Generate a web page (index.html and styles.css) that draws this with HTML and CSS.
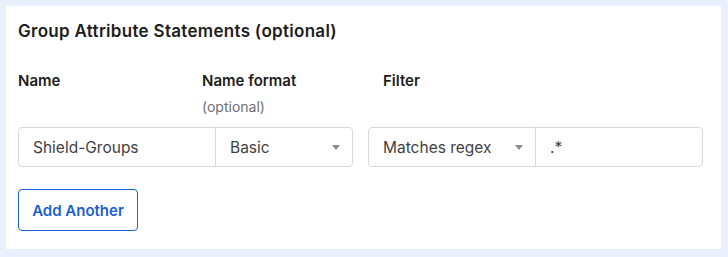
FILE: index.html
```html
<!DOCTYPE html>
<html lang="en">
<head>
    <meta charset="UTF-8">
    <meta name="viewport" content="width=device-width, initial-scale=1.0">
    <title>Group Attribute Statements</title>
    <link rel="stylesheet" href="styles.css">
</head>
<body>
    <div class="panel">
        <h2>Group Attribute Statements (optional)</h2>
        <div class="label-row">
            <div class="label name-label">Name</div>
            <div class="label format-label">Name format<span class="hint">(optional)</span></div>
            <div class="label filter-label">Filter</div>
        </div>
        <div class="field-row">
            <div class="field-group">
                <input type="text" class="text-input name-input" value="Shield-Groups">
                <div class="select format-select">
                    <span>Basic</span>
                    <span class="arrow"></span>
                </div>
            </div>
            <div class="field-group">
                <div class="select filter-select">
                    <span>Matches regex</span>
                    <span class="arrow"></span>
                </div>
                <input type="text" class="text-input filter-input" value=".*">
            </div>
        </div>
        <button type="button" class="add-button">Add Another</button>
    </div>
</body>
</html>
```

FILE: styles.css
```css
body {
    font-family: 'Inter', 'Noto Sans', sans-serif;
    background-color: #e9effc;
    color: #1d1d21;
    margin: 0;
    padding: 6px 7px 8px 6px;
}

.panel {
    background-color: #ffffff;
    height: 243px;
    box-sizing: border-box;
    padding: 15px 12px 0 12px;
}

.panel h2 {
    margin: 0;
    font-size: 17px;
    font-weight: 600;
    line-height: 21px;
    letter-spacing: 0.3px;
}

.label-row {
    display: flex;
    margin-top: 29px;
}

.label {
    font-size: 15px;
    font-weight: 600;
    line-height: 20px;
}

.name-label {
    width: 184px;
}

.format-label {
    width: 181px;
}

.hint {
    display: block;
    margin-top: 6px;
    font-weight: 400;
    font-size: 14px;
    color: #6e6e78;
}

.field-row {
    display: flex;
    gap: 15px;
    margin-top: 10px;
}

.field-group {
    display: flex;
}

.text-input,
.select {
    height: 40px;
    box-sizing: border-box;
    border: 1px solid #d7d7dc;
    font-family: inherit;
    font-size: 15.5px;
    color: #3f3f45;
    background: #ffffff;
}

.text-input {
    padding: 0 14px;
    outline: none;
}

.select {
    display: flex;
    align-items: center;
    justify-content: space-between;
    padding: 0 12px 0 14px;
}

.arrow {
    width: 0;
    height: 0;
    border-left: 4px solid transparent;
    border-right: 4px solid transparent;
    border-top: 5px solid #8a8a94;
}

.name-input {
    width: 198px;
    border-radius: 4px 0 0 4px;
}

.format-select {
    width: 138px;
    margin-left: -1px;
    border-radius: 0 4px 4px 0;
}

.filter-select {
    width: 168px;
    border-radius: 4px 0 0 4px;
}

.filter-input {
    width: 168px;
    margin-left: -1px;
    border-radius: 0 4px 4px 0;
}

.add-button {
    margin-top: 22px;
    width: 120px;
    height: 42px;
    background: #ffffff;
    border: 1px solid #1662dd;
    border-radius: 4px;
    color: #1a5fd1;
    font-family: inherit;
    font-size: 15px;
    font-weight: 600;
    padding: 0;
}
```
